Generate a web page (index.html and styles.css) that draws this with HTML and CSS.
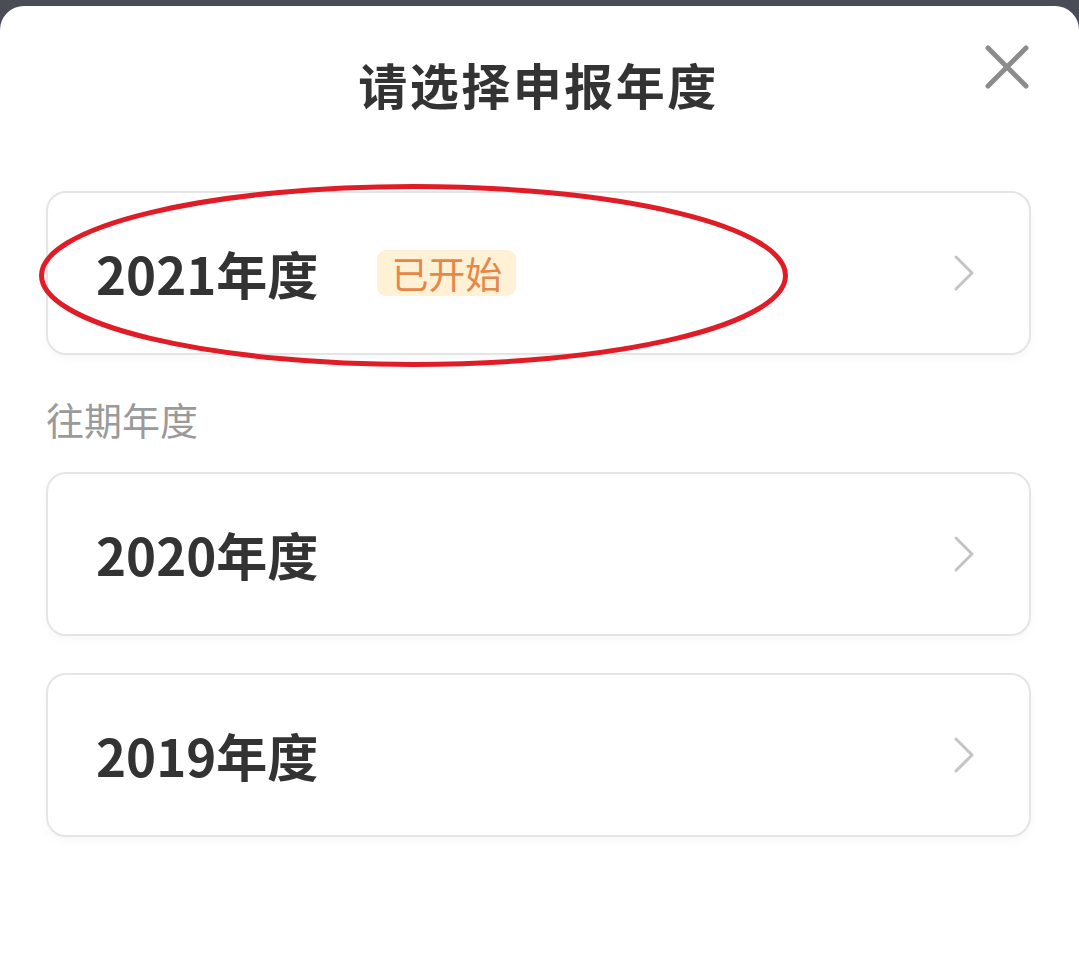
FILE: index.html
```html
<!DOCTYPE html>
<html lang="zh-CN">
<head>
<meta charset="utf-8">
<title>请选择申报年度</title>
<link rel="stylesheet" href="styles.css">
</head>
<body>
<div class="sheet">
  <header class="header">
    <div></div>
    <h1 class="title">请选择申报年度</h1>
    <button class="close" aria-label="关闭">
      <svg width="46" height="46" viewBox="0 0 46 46"><path d="M4 4L42 42M42 4L4 42" stroke="#8c8c8c" stroke-width="5" stroke-linecap="round" fill="none"/></svg>
    </button>
  </header>
  <div class="list">
    <div class="card current">
      <span class="year">2021年度</span>
      <span class="badge">已开始</span>
      <svg class="chev" width="22" height="38" viewBox="0 0 22 38"><path d="M3 3L19 19L3 35" stroke="#c4c4c4" stroke-width="3" stroke-linecap="round" stroke-linejoin="round" fill="none"/></svg>
      <svg class="mark" width="770" height="200" viewBox="0 0 770 200"><ellipse cx="377.5" cy="94.5" rx="372" ry="89" stroke="#e01c26" stroke-width="5" fill="none"/></svg>
    </div>
    <div class="section">往期年度</div>
    <div class="card">
      <span class="year">2020年度</span>
      <svg class="chev" width="22" height="38" viewBox="0 0 22 38"><path d="M3 3L19 19L3 35" stroke="#c4c4c4" stroke-width="3" stroke-linecap="round" stroke-linejoin="round" fill="none"/></svg>
    </div>
    <div class="card gap">
      <span class="year">2019年度</span>
      <svg class="chev" width="22" height="38" viewBox="0 0 22 38"><path d="M3 3L19 19L3 35" stroke="#c4c4c4" stroke-width="3" stroke-linecap="round" stroke-linejoin="round" fill="none"/></svg>
    </div>
  </div>
</div>
</body>
</html>
```
FILE: styles.css
```css
html, body {
  margin: 0;
  padding: 0;
}
body {
  background: #4a4d55;
  font-family: "Noto Sans CJK SC", "Noto Sans", sans-serif;
  overflow: hidden;
}
.sheet {
  margin-top: 6px;
  height: 960px;
  background: #ffffff;
  border-radius: 24px 24px 0 0;
  padding: 0 48px 0 46px;
  box-sizing: border-box;
}
.header {
  display: grid;
  grid-template-columns: 1fr auto 1fr;
  height: 185px;
}
.title {
  margin: 0;
  padding-top: 46px;
  line-height: 64px;
  font-size: 49px;
  font-weight: 700;
  color: #333333;
  letter-spacing: 2.5px;
}
.close {
  justify-self: end;
  align-self: start;
  margin-top: 38px;
  margin-right: 1px;
  padding: 0;
  border: 0;
  background: none;
  width: 46px;
  height: 46px;
}
.close svg { display: block; }
.list {
  display: flex;
  flex-direction: column;
}
.card {
  position: relative;
  height: 164px;
  box-sizing: border-box;
  border: 2px solid #e4e5e7;
  border-radius: 20px;
  background: #ffffff;
  box-shadow: 0 4px 10px rgba(0, 0, 0, 0.03);
  display: flex;
  align-items: center;
  padding: 0 54px 0 48px;
}
.card.gap { margin-top: 37px; }
.year {
  font-size: 51px;
  font-weight: 700;
  color: #333333;
  line-height: 1;
}
.badge {
  margin-left: 59px;
  background: #fef1d6;
  color: #e4884a;
  font-size: 37px;
  line-height: 46px;
  height: 46px;
  padding: 0 14px;
  border-radius: 9px;
}
.chev {
  margin-left: auto;
  display: block;
}
.mark {
  position: absolute;
  left: -12px;
  top: -12px;
  pointer-events: none;
}
.section {
  padding: 38px 0 28px;
  line-height: 51px;
  font-size: 38px;
  color: #9a9a9a;
}
```
